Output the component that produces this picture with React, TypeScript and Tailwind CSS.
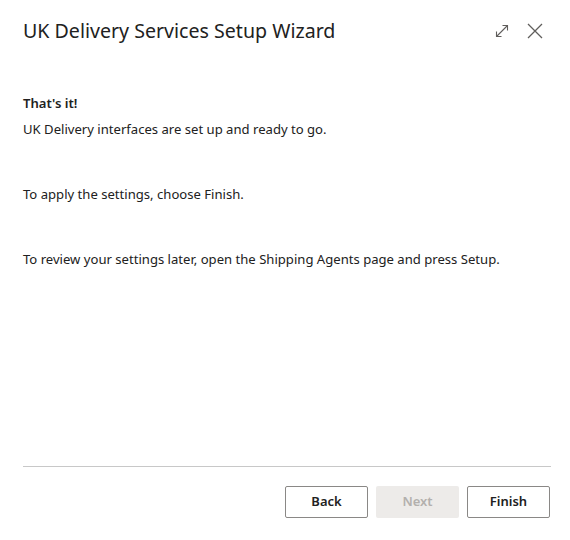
import React from 'react';

const font = { fontFamily: '"Noto Sans", "Open Sans", sans-serif' };

export default function App() {
  return (
    <div className="w-[570px] h-[540px] bg-white flex flex-col text-[#212121]" style={font}>
      {/* Header */}
      <div className="flex items-center justify-between pl-[23px] pr-[26px] pt-[18px] h-[44px]">
        <h1 className="text-[19.6px] leading-[26px] text-[#212121]">UK Delivery Services Setup Wizard</h1>
        <div className="flex items-center gap-[16px] text-[#605e5c]">
          <svg width="16" height="16" viewBox="0 0 16 16" fill="none" stroke="currentColor" strokeWidth="1.1">
            <path d="M2.5 13.5 L13.5 2.5" />
            <path d="M8.5 2.5 H13.5 V7.5" />
            <path d="M2.5 8.5 V13.5 H7.5" />
          </svg>
          <svg width="18" height="18" viewBox="0 0 18 18" fill="none" stroke="currentColor" strokeWidth="1.3">
            <path d="M2 2 L16 16 M16 2 L2 16" />
          </svg>
        </div>
      </div>

      {/* Body */}
      <div className="flex-1 px-[23px] pt-[50px] text-[13.1px] leading-[18px]">
        <p className="font-semibold">That's it!</p>
        <p className="mt-[8px]">UK Delivery interfaces are set up and ready to go.</p>
        <p className="mt-[47px]">To apply the settings, choose Finish.</p>
        <p className="mt-[47px]">To review your settings later, open the Shipping Agents page and press Setup.</p>
      </div>

      {/* Footer */}
      <div className="pl-[23px] pr-[19px]">
        <div className="border-t border-[#c8c8c8]" />
        <div className="flex justify-end gap-[8px] pt-[19px] pb-[22px] pr-[1px]">
          <button className="w-[83px] h-[32px] border border-[#8a8886] rounded-[2px] text-[13px] font-semibold text-[#212121] bg-white">Back</button>
          <button className="w-[83px] h-[32px] rounded-[2px] text-[13px] font-semibold text-[#b3b0ad] bg-[#edebe9]" disabled>Next</button>
          <button className="w-[83px] h-[32px] border border-[#8a8886] rounded-[2px] text-[13px] font-semibold text-[#212121] bg-white">Finish</button>
        </div>
      </div>
    </div>
  );
}
